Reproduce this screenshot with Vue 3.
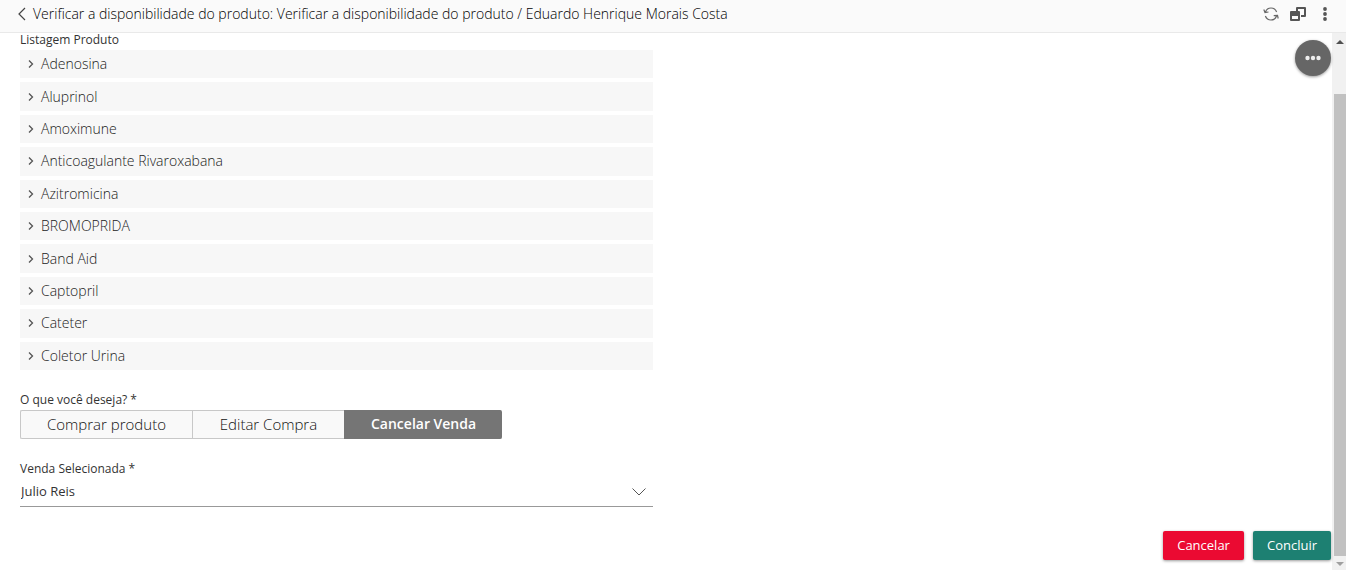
<script setup>
import { ref } from 'vue'

const products = [
  'Adenosina',
  'Aluprinol',
  'Amoximune',
  'Anticoagulante Rivaroxabana',
  'Azitromicina',
  'BROMOPRIDA',
  'Band Aid',
  'Captopril',
  'Cateter',
  'Coletor Urina',
]
const actions = ['Comprar produto', 'Editar Compra', 'Cancelar Venda']
const action = ref('Cancelar Venda')
const sale = ref('Julio Reis')
</script>

<template>
  <div class="page">
    <header class="topbar">
      <button class="back" type="button" aria-label="Voltar">
        <svg width="10" height="14" viewBox="0 0 10 14"><path d="M8 1 2 7l6 6" /></svg>
      </button>
      <h1>Verificar a disponibilidade do produto: Verificar a disponibilidade do produto / Eduardo Henrique Morais Costa</h1>
      <div class="tools">
        <button type="button" aria-label="Atualizar">
          <svg class="refresh" width="16" height="14" viewBox="0 0 16 14">
            <path d="M2.500 5C3.300 2.600 5.400 1 8 1c2.600 0 4.700 1.500 5.600 4M13.500 9C12.700 11.400 10.600 13 8 13c-2.600 0-4.700-1.500-5.600-4M.8 2.500l1.200 3 3.500-.5M15.200 11.500l-.7-3-3.800.2" />
          </svg>
        </button>
        <button type="button" aria-label="Abrir em nova janela">
          <svg width="16" height="14" viewBox="0 0 16 14">
            <path class="bold" d="M7 4V1h8v8h-4M1 5h8v8H1z" />
            <path class="fill" d="M1 5h8v4H1z" />
          </svg>
        </button>
        <button type="button" aria-label="Mais opções">
          <svg width="16" height="16" viewBox="0 0 16 16">
            <g class="fill"><circle cx="8" cy="3" r="1.900" /><circle cx="8" cy="8" r="1.900" /><circle cx="8" cy="13" r="1.900" /></g>
          </svg>
        </button>
      </div>
    </header>

    <div class="body">
      <main class="content">
        <button class="fab" type="button" aria-label="Ações">
          <svg width="16" height="6" viewBox="0 0 16 6">
            <circle cx="2.500" cy="3" r="2.200" /><circle cx="8" cy="3" r="2.200" /><circle cx="13.500" cy="3" r="2.200" />
          </svg>
        </button>

        <div class="columns">
          <form class="form" @submit.prevent>
            <section>
              <h2 class="label list-title">Listagem Produto</h2>
              <ul class="products">
                <li v-for="p in products" :key="p">
                  <button class="product" type="button" aria-expanded="false">
                    <svg width="6" height="8" viewBox="0 0 6 8"><path d="m1 .5 3.500 3.500L1 7.500" /></svg>
                    <span>{{ p }}</span>
                  </button>
                </li>
              </ul>
            </section>

            <section class="field">
              <h2 id="action-label" class="label">O que você deseja? *</h2>
              <div class="segments" role="group" aria-labelledby="action-label">
                <button
                  v-for="a in actions"
                  :key="a"
                  type="button"
                  :class="{ active: a === action }"
                  :aria-pressed="a === action"
                  @click="action = a"
                >{{ a }}</button>
              </div>
            </section>

            <section class="field">
              <label class="label" for="sale">Venda Selecionada *</label>
              <div class="select">
                <select id="sale" v-model="sale">
                  <option>Julio Reis</option>
                </select>
                <svg width="14" height="8" viewBox="0 0 14 8"><path d="m.5.5 6.500 6.500L13.500.5" /></svg>
              </div>
            </section>
          </form>
        </div>

        <footer class="footer">
          <button class="cancel" type="button">Cancelar</button>
          <button class="finish" type="button">Concluir</button>
        </footer>
      </main>

      <div class="scrollbar" aria-hidden="true">
        <svg width="8" height="4" viewBox="0 0 8 4"><path class="up" d="M0 4 4 0l4 4z" /></svg>
        <div class="track"><div class="thumb"></div></div>
        <svg width="8" height="4" viewBox="0 0 8 4"><path class="down" d="m0 0 4 4 4-4z" /></svg>
      </div>
    </div>
  </div>
</template>

<style>
body {
  margin: 0;
}
</style>

<style scoped>
.page {
  display: flex;
  flex-direction: column;
  min-height: 100vh;
  background: #fff;
  color: #333;
  font-family: "Open Sans", "Noto Sans", sans-serif;
  font-size: 14px;
  font-weight: 300;
}
.page * {
  box-sizing: border-box;
}
button,
select {
  margin: 0;
  border: 0;
  padding: 0;
  background: none;
  color: inherit;
  font: inherit;
  cursor: pointer;
}
svg {
  display: block;
  flex: none;
  fill: none;
  stroke: #555;
}
.topbar {
  display: flex;
  align-items: center;
  height: 33px;
  padding: 0 13px 4px 17px;
  border-bottom: 1px solid #e9e9e9;
  background: #fafafa;
}
.topbar h1 {
  flex: 1;
  margin: 0 0 0 6px;
  color: #000;
  font-size: 14px;
  line-height: 20px;
  font-weight: 300;
}
.back svg {
  stroke: #444;
  stroke-width: 1.200;
}
.tools {
  display: flex;
  align-items: center;
  gap: 11px;
}
.refresh {
  stroke: #666;
  stroke-width: 1.200;
}
.bold {
  stroke-width: 2;
  stroke-linejoin: round;
}
.fill {
  fill: #555;
  stroke: none;
}
.body {
  display: flex;
  flex: 1;
}
.content {
  position: relative;
  display: flex;
  flex: 1;
  flex-direction: column;
  min-width: 0;
}
.fab {
  position: absolute;
  top: 7px;
  right: 1px;
  display: grid;
  place-items: center;
  width: 36px;
  height: 36px;
  border-radius: 50%;
  background: #666;
  box-shadow: 0 1px 3px rgba(0, 0, 0, 0.4);
}
.fab svg {
  fill: #eee;
  stroke: none;
}
.columns {
  display: grid;
  grid-template-columns: 1fr 1fr;
  column-gap: 26px;
  padding: 0 20px;
}
.label {
  display: block;
  margin: 0;
  font-size: 12px;
  line-height: 17px;
  font-weight: 400;
}
.list-title {
  margin-bottom: 3px;
  line-height: 14px;
}
.products {
  display: grid;
  grid-auto-rows: 1fr;
  gap: 4px;
  min-height: 320px;
  margin: 0;
  padding: 0;
  list-style: none;
}
.product {
  display: flex;
  align-items: center;
  gap: 7px;
  width: 100%;
  height: 100%;
  padding: 0 8px;
  background: #f7f7f7;
  color: #222;
  line-height: 20px;
  text-align: left;
}
.product svg {
  stroke-width: 1.300;
}
.field {
  margin-top: 21px;
}
.segments {
  display: inline-flex;
  margin-top: 2px;
  vertical-align: top;
}
.segments button {
  min-width: 152px;
  height: 29px;
  padding: 0 26px 2px;
  border: 1px solid #c8c8c8;
  border-right: 0;
  background: #f9f9f9;
  color: #111;
  font-size: 15px;
  line-height: 20px;
}
.segments button:first-child {
  border-radius: 2px 0 0 2px;
}
.segments button:last-child {
  border-radius: 0 2px 2px 0;
}
.segments .active {
  border-color: #757575;
  background: #757575;
  color: #fff;
  font-size: 14px;
  font-weight: 600;
}
.select {
  position: relative;
  border-bottom: 1px solid #999;
}
.select select {
  display: block;
  width: 100%;
  height: 29px;
  padding: 0 24px 2px 1px;
  appearance: none;
  font-size: 13px;
  font-weight: 400;
}
.select svg {
  position: absolute;
  top: 11px;
  right: 7px;
  pointer-events: none;
}
.footer {
  display: flex;
  justify-content: flex-end;
  gap: 9px;
  margin-top: auto;
  padding: 20px 1px 10px;
}
.footer button {
  height: 29px;
  padding: 0 14px 2px;
  border-radius: 2px;
  box-shadow: 0 1px 3px rgba(0, 0, 0, 0.4);
  color: #fff;
  font-size: 13px;
  font-weight: 400;
  line-height: 18px;
}
.footer .cancel {
  background: #eb0a32;
}
.footer .finish {
  background: #1d8072;
}
.scrollbar {
  display: flex;
  flex-direction: column;
  align-items: center;
  width: 14px;
  padding: 7px 0 4px 2px;
  background: #f1f1f1;
}
.scrollbar svg {
  stroke: none;
}
.track {
  flex: 1;
  width: 100%;
  margin: 6px 0;
  padding-top: 44px;
}
.thumb {
  height: 100%;
  background: #c1c1c1;
}
.up {
  fill: #505050;
}
.down {
  fill: #a0a0a0;
}
</style>
